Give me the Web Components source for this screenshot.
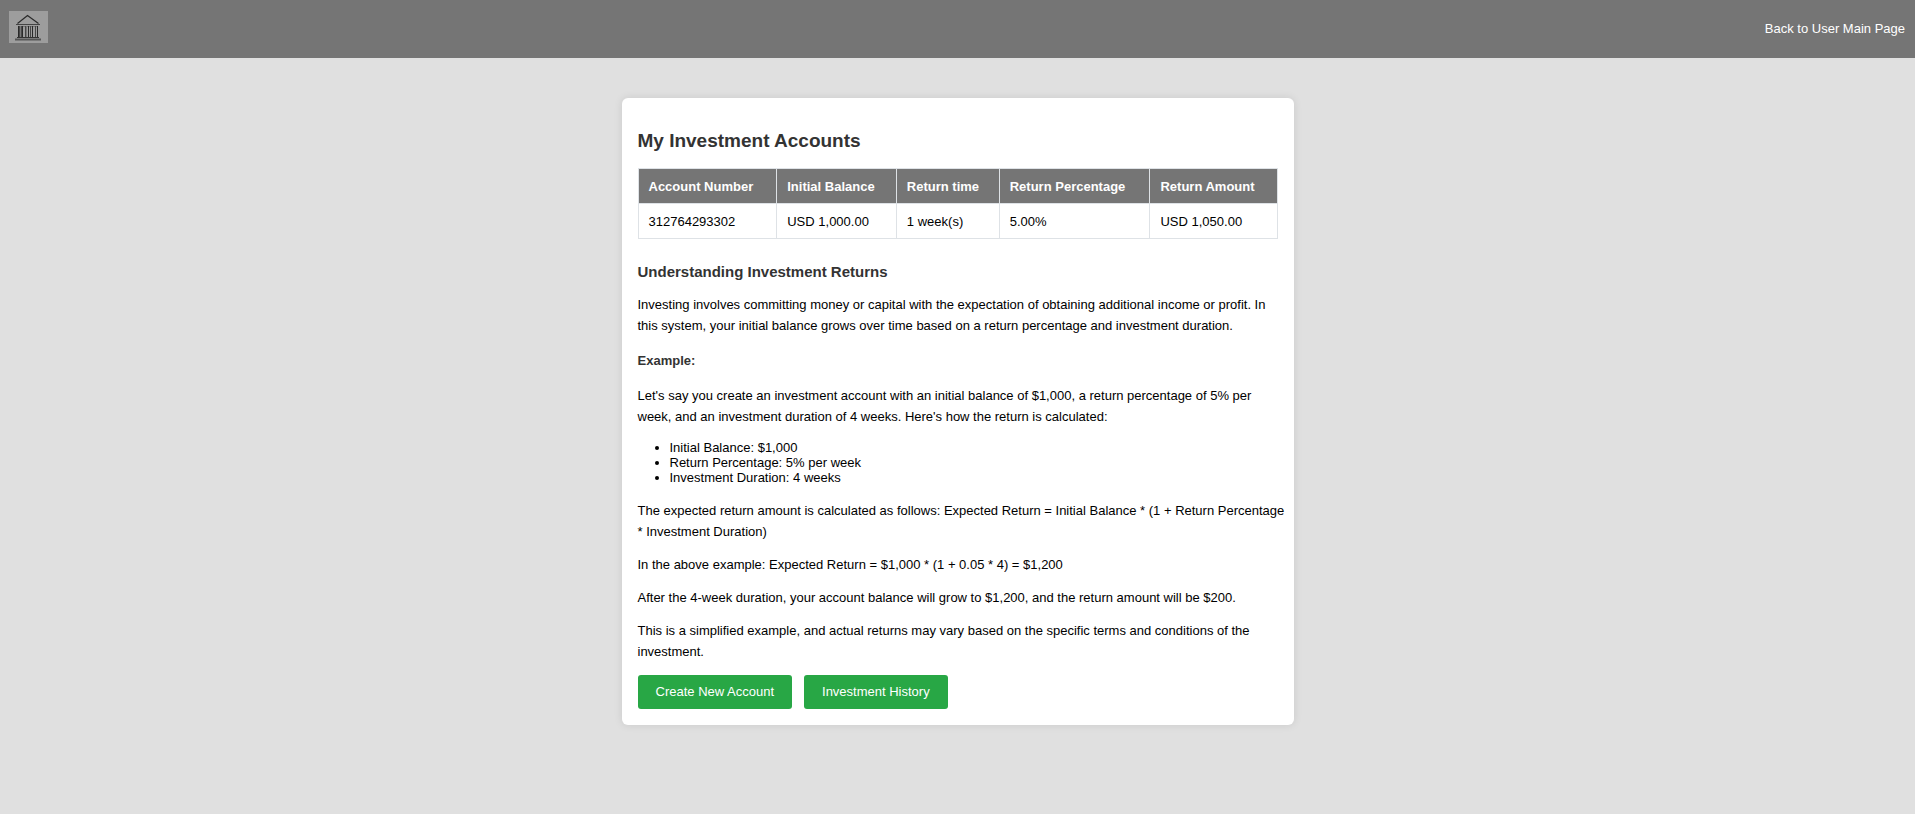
<!DOCTYPE html>
<html lang="en">
<head>
<meta charset="utf-8">
<meta name="viewport" content="width=device-width, initial-scale=1">
<title>My Investment Accounts</title>
<style>
body { margin: 0; min-height: 100vh; background: #e0e0e0; color: #000; font: 13px/21px "Liberation Sans", Arial, sans-serif; }
h2, h3, h4 { margin: 0; color: #333; }
h2 { font-size: 19px; line-height: 22px; margin: 16px 0; }
h3 { font-size: 15px; line-height: 18px; margin: 24px 0 13px; }
h4 { font-size: 13px; line-height: 15px; margin: 17px 0; }
p { margin: 12px -10px 12px 0; }
ul { margin: 13px 0 15px; padding-left: 32px; line-height: 15px; }
</style>
</head>
<body>
<site-header></site-header>
<main>
<content-card>
  <h2>My Investment Accounts</h2>
  <accounts-table></accounts-table>
  <h3>Understanding Investment Returns</h3>
  <p>Investing involves committing money or capital with the expectation of obtaining additional income or profit. In this system, your initial balance grows over time based on a return percentage and investment duration.</p>
  <h4>Example:</h4>
  <p>Let's say you create an investment account with an initial balance of $1,000, a return percentage of 5% per week, and an investment duration of 4 weeks. Here's how the return is calculated:</p>
  <ul>
    <li>Initial Balance: $1,000</li>
    <li>Return Percentage: 5% per week</li>
    <li>Investment Duration: 4 weeks</li>
  </ul>
  <p>The expected return amount is calculated as follows: Expected Return = Initial Balance * (1 + Return Percentage * Investment Duration)</p>
  <p>In the above example: Expected Return = $1,000 * (1 + 0.05 * 4) = $1,200</p>
  <p>After the 4-week duration, your account balance will grow to $1,200, and the return amount will be $200.</p>
  <p>This is a simplified example, and actual returns may vary based on the specific terms and conditions of the investment.</p>
  <action-button slot="actions">Create New Account</action-button>
  <action-button slot="actions">Investment History</action-button>
</content-card>
</main>
<script>
const define = (name, markup) => customElements.define(name, class extends HTMLElement {
  constructor() {
    super();
    this.attachShadow({ mode: "open" }).innerHTML = markup;
  }
});

define("bank-logo", `
<style>
:host { display: block; width: 39px; height: 32px; }
svg { display: block; width: 100%; height: 100%; }
</style>
<svg viewBox="0 0 39 32" role="img" aria-label="Bank">
  <rect width="39" height="32" fill="#9d9d9d"/>
  <path d="M8.500 12.500 L18.500 4.500 L29.500 12.500" fill="none" stroke="#2a2a2a" stroke-width="1.200"/>
  <path d="M7 13.500H31" stroke="#444"/>
  <path d="M9 15.500H29" stroke="#777"/>
  <path d="M9.500 15V26M13.500 15V26M19.500 15V26M23.500 15V26M28.500 15V26" stroke="#2a2a2a"/>
  <path d="M10.500 15V26M12.500 15V26M16.500 15V26M21.500 15V26M26.500 15V26" stroke="#484848"/>
  <path d="M11.500 15V26M17.500 15V26" stroke="#777"/>
  <path d="M8 26.500H30" stroke="#333"/>
  <path d="M6 28.500H32" stroke="#555" stroke-width="2"/>
</svg>`);

define("site-header", `
<style>
:host { display: block; background: #757575; }
header { display: flex; justify-content: space-between; align-items: flex-start; padding: 11px 10px 12px 9px; }
a { display: block; color: #fff; text-decoration: none; line-height: 35px; }
</style>
<header><bank-logo></bank-logo><nav><a href="#">Back to User Main Page</a></nav></header>`);

define("content-card", `
<style>
:host { display: flow-root; max-width: 640px; margin: 40px auto; padding: 0 16px 16px; background: #fff; border-radius: 6px; box-shadow: 0 0 8px rgba(0,0,0,.1); }
.body { padding-top: 16px; display: flow-root; }
.actions { display: flex; gap: 12px; padding-top: 1px; }
</style>
<div class="body"><slot></slot></div>
<div class="actions"><slot name="actions"></slot></div>`);

define("accounts-table", `
<style>
:host { display: block; }
table { width: 100%; border-collapse: collapse; line-height: 14px; }
th, td { border: 1px solid #dee2e6; padding: 11px 10px 9px; text-align: left; white-space: nowrap; }
th { background: #757575; color: #fff; }
</style>
<table>
<thead><tr><th>Account Number</th><th>Initial Balance</th><th>Return time</th><th>Return Percentage</th><th>Return Amount</th></tr></thead>
<tbody><tr><td>312764293302</td><td>USD 1,000.00</td><td>1 week(s)</td><td>5.00%</td><td>USD 1,050.00</td></tr></tbody>
</table>`);

define("action-button", `
<style>
:host { display: block; }
button { display: block; margin: 0; border: 0; border-radius: 3px; padding: 10px 18px; background: #28a745; color: #fff; font: inherit; line-height: 14px; cursor: pointer; }
</style>
<button type="button"><slot></slot></button>`);
</script>
</body>
</html>
